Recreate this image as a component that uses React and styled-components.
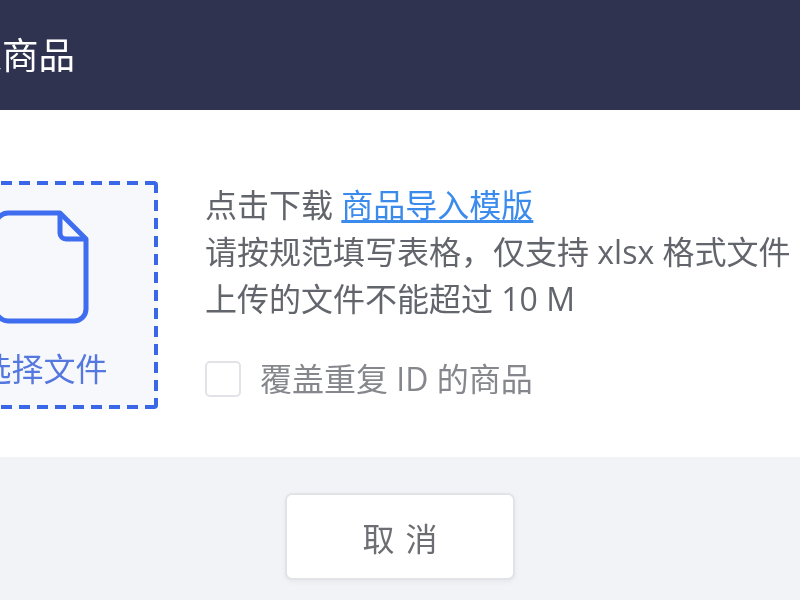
import React from 'react';
import styled, { createGlobalStyle } from 'styled-components';

const GlobalStyle = createGlobalStyle`
  html, body {
    margin: 0;
    padding: 0;
    background: #fff;
  }
`;

const Page = styled.div`
  width: 800px;
  height: 600px;
  overflow: hidden;
  font-family: "Open Sans", "Noto Sans CJK SC", sans-serif;
  filter: blur(0.6px);
`;

// the dialog is wider than the window, its left part is cut off
const Dialog = styled.div`
  width: 871px;
  height: 600px;
  margin-left: -71px;
  display: flex;
  flex-direction: column;
`;

const Header = styled.header`
  height: 110px;
  flex: none;
  box-sizing: border-box;
  background: #2f3350;
  display: flex;
  align-items: center;
  color: #fff;
  font-size: 36.5px;
  line-height: 1;
`;

const Body = styled.section`
  height: 347px;
  flex: none;
  box-sizing: border-box;
  padding-top: 71px;
  background: #fff;
  display: flex;
  gap: 47px;
`;

const DropZone = styled.div`
  width: 229px;
  height: 228px;
  flex: none;
  box-sizing: border-box;
  padding-top: 29px;
  border-radius: 4px;
  display: flex;
  flex-direction: column;
  align-items: center;
  color: #5578e0;
  font-size: 32px;
  line-height: 40px;
  background:
    repeating-linear-gradient(90deg, #3a66e8 0 11px, transparent 11px 18px) top / 100% 4px no-repeat,
    repeating-linear-gradient(90deg, #3a66e8 0 11px, transparent 11px 18px) bottom / 100% 4px no-repeat,
    repeating-linear-gradient(0deg, #3a66e8 0 11px, transparent 11px 18px) right / 4px 100% no-repeat,
    #f7f8fb;
`;

const FileIcon = styled.svg`
  display: block;
  width: 94px;
  height: 114px;
  margin: 0 3px 25px 0;
  color: #3f6df0;
`;

const Info = styled.div`
  display: flex;
  flex-direction: column;
  color: #62656c;
  font-size: 32px;
  line-height: 47px;
  white-space: nowrap;
`;

const Line = styled.div``;

const TemplateLink = styled.a`
  color: #3b8bec;
  text-decoration: underline;
  text-underline-offset: 3px;
`;

const OptionRow = styled.label`
  display: flex;
  align-items: center;
  gap: 19px;
  margin-top: 33px;
  color: #85878c;
`;

const Box = styled.span`
  width: 36px;
  height: 36px;
  box-sizing: border-box;
  flex: none;
  background: #fff;
  border: 2px solid #e1e3e8;
  border-radius: 5px;
`;

const Footer = styled.footer`
  flex: 1;
  width: 800px;
  margin-left: 71px;
  box-sizing: border-box;
  background: #f2f3f6;
  padding-top: 36px;
  display: flex;
  justify-content: center;
  align-items: flex-start;
`;

const CancelButton = styled.button`
  width: 230px;
  height: 87px;
  box-sizing: border-box;
  background: #fff;
  border: 2px solid #e2e3e7;
  border-radius: 7px;
  box-shadow: 0 2px 5px rgba(0, 0, 0, 0.05);
  color: #6c6e73;
  font-family: inherit;
  font-size: 32px;
  letter-spacing: 11px;
  padding: 0 0 0 11px;
`;

export default function App() {
  return (
    <>
      <GlobalStyle />
      <Page>
        <Dialog>
          <Header>导入商品</Header>
          <Body>
            <DropZone>
              <FileIcon viewBox="0 0 94 114" fill="none" stroke="currentColor" strokeWidth="5" strokeLinejoin="round">
                <path d="M13 3H65L91 29V99a12 12 0 0 1-12 12H13a12 12 0 0 1-12-12V15A12 12 0 0 1 13 3Z" />
                <path d="M65 3V23a6 6 0 0 0 6 6H91" />
              </FileIcon>
              选择文件
            </DropZone>
            <Info>
              <Line>点击下载 <TemplateLink>商品导入模版</TemplateLink></Line>
              <Line>请按规范填写表格，仅支持 xlsx 格式文件</Line>
              <Line>上传的文件不能超过 10 M</Line>
              <OptionRow>
                <Box />
                覆盖重复 ID 的商品
              </OptionRow>
            </Info>
          </Body>
          <Footer>
            <CancelButton>取消</CancelButton>
          </Footer>
        </Dialog>
      </Page>
    </>
  );
}
